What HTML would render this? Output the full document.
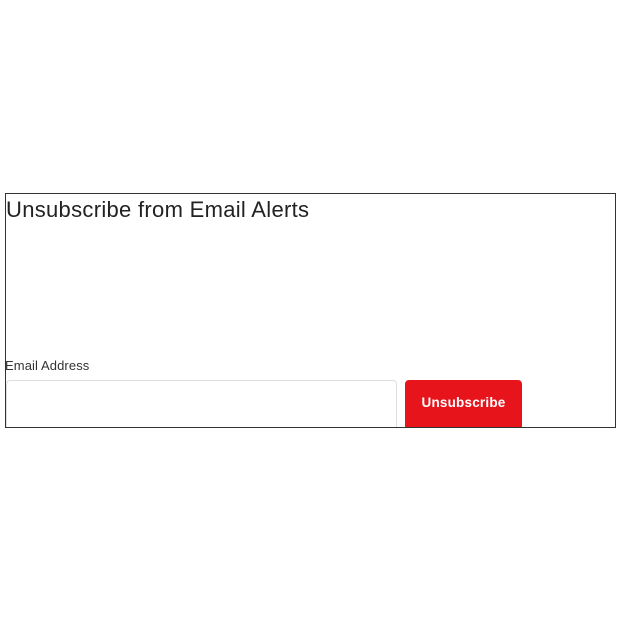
<!DOCTYPE html>
<html><head><style>
body{margin:0;width:620px;height:620px;background:#fff;font-family:"Liberation Sans",sans-serif;position:relative;overflow:hidden}
.box{position:absolute;left:5px;top:193px;width:609px;height:233px;border:1px solid #333;overflow:hidden}
h1{position:absolute;left:0;top:3px;margin:0;font-size:22px;font-weight:normal;color:#222;white-space:nowrap;letter-spacing:0.3px}
.lbl{position:absolute;left:-1px;top:164px;font-size:13px;color:#333;letter-spacing:0.1px}
.inp{position:absolute;left:0;top:186px;width:391px;height:52px;border:1px solid #ddd;border-radius:4px;box-sizing:border-box}
.btn{position:absolute;left:399px;top:186px;width:117px;height:52px;background:#e8141c;border-radius:4px;color:#fff;font-weight:bold;font-size:13.5px;text-align:center;line-height:46px;letter-spacing:0.2px}
</style></head><body>
<div class="box">
<h1>Unsubscribe from Email Alerts</h1>
<div class="lbl">Email Address</div>
<div class="inp"></div>
<div class="btn">Unsubscribe</div>
</div>
</body></html>
